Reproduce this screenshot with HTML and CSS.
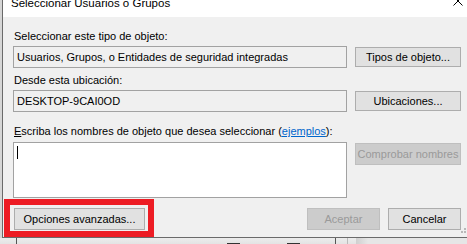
FILE: index.html
```html
<!DOCTYPE html>
<html>

<head>
  <title>Seleccionar Usuarios o Grupos</title>
  <meta charset="utf-8">
  <link rel="stylesheet" href="styles.css">
</head>

<body>
  <div class="dialog">
    <div class="titlebar">
      <span class="title">Seleccionar Usuarios o Grupos</span>
      <svg class="close" width="10" height="10" viewBox="0 0 10 10">
        <path d="M0.5 0.5 L9.5 9.5 M9.5 0.5 L0.5 9.5" stroke="#000" stroke-width="1" fill="none" />
      </svg>
    </div>

    <div class="content">
      <div class="label">Seleccionar este tipo de objeto:</div>
      <div class="row">
        <div class="field readonly">Usuarios, Grupos, o Entidades de seguridad integradas</div>
        <button class="btn side-btn">Tipos de objeto...</button>
      </div>

      <div class="label label-gap">Desde esta ubicación:</div>
      <div class="row">
        <div class="field readonly">DESKTOP-9CAI0OD</div>
        <button class="btn side-btn">Ubicaciones...</button>
      </div>

      <div class="label label-gap-lg"><u>E</u>scriba los nombres de objeto que desea seleccionar (<a href="#" class="link">ejemplos</a>):</div>
      <div class="row row-names">
        <div class="names-box"><span class="caret"></span></div>
        <button class="btn side-btn btn-tall" disabled>Comprobar nombres</button>
      </div>

      <div class="footer">
        <div class="highlight">
          <button class="btn btn-advanced">Opciones avanzadas...</button>
        </div>
        <div class="actions">
          <button class="btn btn-action" disabled>Aceptar</button>
          <button class="btn btn-action">Cancelar</button>
        </div>
      </div>
    </div>

    <svg class="grip" width="8" height="8" viewBox="0 0 8 8">
      <rect x="6" y="0" width="2" height="2" fill="#b8b8b8" />
      <rect x="3" y="3" width="2" height="2" fill="#b8b8b8" />
      <rect x="6" y="3" width="2" height="2" fill="#b8b8b8" />
    </svg>
  </div>

  <div class="behind">
    <span class="mark mark-a"></span>
    <span class="mark mark-b"></span>
    <span class="vline vline-a"></span>
    <span class="vline vline-b"></span>
    <span class="vline vline-c"></span>
    <span class="shade"></span>
  </div>
</body>

</html>
```

FILE: styles.css
```css
body {
  margin: 0;
  width: 467px;
  height: 244px;
  overflow: hidden;
  background-color: #d6d6d6;
  font-family: "Liberation Sans", Arial, sans-serif;
  font-size: 11px;
  color: #000;
}

.dialog {
  position: relative;
  margin-left: 2px;
  border-left: 1px solid #6a6a6a;
  border-bottom: 1px solid #6a6a6a;
  background-color: #f0f0f0;
}

.titlebar {
  display: flex;
  justify-content: space-between;
  align-items: flex-start;
  height: 17px;
  padding-left: 8px;
  background-color: #fff;
  overflow: hidden;
}

.title {
  font-size: 11.5px;
  line-height: 12px;
  margin-top: -3px;
}

.close {
  margin-top: -4px;
  margin-right: 4px;
}

.content {
  padding: 13px 6px 0 10px;
}

.label {
  line-height: 13px;
  padding-left: 1px;
}

.label-gap {
  margin-top: 6px;
}

.label-gap-lg {
  margin-top: 13px;
}

.link {
  color: #0066cc;
}

.row {
  display: flex;
  gap: 8px;
  align-items: flex-start;
  margin-top: 3px;
}

.row-names {
  margin-top: 4px;
}

.field {
  flex: 1;
  box-sizing: border-box;
  height: 22px;
  line-height: 20px;
  padding-left: 3px;
  border: 1px solid #a2a2a2;
  white-space: nowrap;
  overflow: hidden;
}

.readonly {
  background-color: #f0f0f0;
}

.names-box {
  flex: 1;
  box-sizing: border-box;
  height: 56px;
  padding: 3px 0 0 3px;
  border: 1px solid #a2a2a2;
  background-color: #fff;
}

.caret {
  display: block;
  width: 1px;
  height: 13px;
  background-color: #000;
}

.btn {
  box-sizing: border-box;
  height: 22px;
  padding: 0;
  border: 1px solid #adadad;
  background-color: #e1e1e1;
  font-family: "Liberation Sans", Arial, sans-serif;
  font-size: 11px;
  color: #000;
}

.btn:disabled {
  border-color: #bfbfbf;
  background-color: #cccccc;
  color: #9a9a9a;
}

.side-btn {
  width: 106px;
  height: 20px;
  margin-top: 1px;
}

.btn-tall {
  height: 22px;
}

.footer {
  display: flex;
  align-items: flex-start;
  margin-top: 1px;
}

.highlight {
  margin-left: -9px;
  padding: 3px 3px 1px 4px;
  border: 6px solid #ed1c24;
}

.btn-advanced {
  display: block;
  width: 131px;
}

.actions {
  display: flex;
  gap: 8px;
  margin-left: auto;
  margin-top: 9px;
}

.btn-action {
  width: 73px;
}

.grip {
  position: absolute;
  right: 1px;
  bottom: 1px;
}

.behind {
  position: relative;
  height: 7px;
  background: linear-gradient(#ececec, #e2e2e2);
}

.mark {
  position: absolute;
  height: 2px;
  width: 13px;
  background-color: #333;
}

.mark-a {
  left: 227px;
  top: 5px;
}

.mark-b {
  left: 287px;
  top: 5px;
}

.vline {
  position: absolute;
  top: 0;
  width: 1px;
  height: 7px;
  background-color: #555;
}

.vline-a {
  left: 16px;
}

.vline-b {
  left: 335px;
}

.vline-c {
  left: 347px;
  background-color: #bbb;
}

.shade {
  position: absolute;
  left: 356px;
  top: 0;
  right: 0;
  height: 7px;
  background: linear-gradient(90deg, #cfcfcf, #e6e6e6 12px);
}
```
